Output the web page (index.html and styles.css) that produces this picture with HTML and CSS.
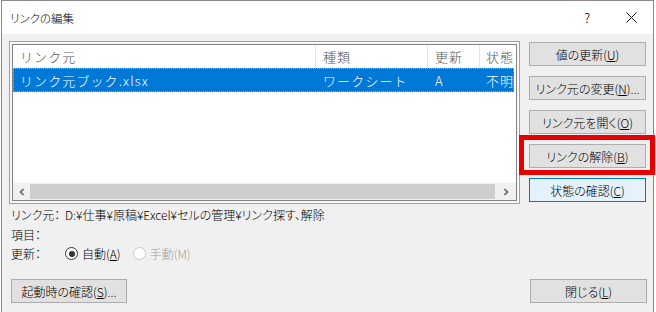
FILE: index.html
```html
<!DOCTYPE html>
<html lang="ja">
<head>
<meta charset="utf-8">
<title>リンクの編集</title>
<link rel="stylesheet" href="styles.css">
</head>
<body>
<div class="window">
  <div class="titlebar">
    <span class="title">リンクの編集</span>
    <span class="help">?</span>
    <span class="close"><svg width="11" height="11" viewBox="0 0 11 11"><path d="M0.5 0.5 L10.5 10.5 M10.5 0.5 L0.5 10.5" stroke="#111" stroke-width="1" fill="none"/></svg></span>
  </div>
  <div class="body">
    <div class="top">
      <div class="listbox">
        <div class="lv">
          <div class="lv-head">
            <div class="c c1">リンク元</div>
            <div class="c c2">種類</div>
            <div class="c c3">更新</div>
            <div class="c c4">状態</div>
          </div>
          <div class="lv-row sel">
            <div class="c c1">リンク元ブック.xlsx</div>
            <div class="c c2">ワークシート</div>
            <div class="c c3">A</div>
            <div class="c c4">不明</div>
          </div>
          <div class="lv-empty"></div>
          <div class="hscroll">
            <span class="arr"><svg width="8" height="8" viewBox="0 0 8 8"><path d="M5.5 1 L2.5 4 L5.5 7" stroke="#606060" stroke-width="1.6" fill="none"/></svg></span>
            <div class="track"></div>
            <span class="arr"><svg width="8" height="8" viewBox="0 0 8 8"><path d="M2.5 1 L5.5 4 L2.5 7" stroke="#606060" stroke-width="1.6" fill="none"/></svg></span>
          </div>
        </div>
      </div>
      <div class="btncol">
        <button class="btn">値の更新(<u>U</u>)</button>
        <button class="btn">リンク元の変更(<u>N</u>)...</button>
        <button class="btn">リンク元を開く(<u>O</u>)</button>
        <div class="hl">
          <button class="btn">リンクの解除(<u>B</u>)</button>
          <div class="redbox"></div>
        </div>
        <button class="btn focus">状態の確認(<u>C</u>)</button>
      </div>
    </div>
    <div class="info">
      <div class="irow"><span class="lbl">リンク元：</span><span class="val">D:¥仕事¥原稿¥Excel¥セルの管理¥リンク探す、解除</span></div>
      <div class="irow"><span class="lbl">項目：</span><span class="val"></span></div>
      <div class="irow"><span class="lbl">更新：</span>
        <span class="radios">
          <span class="radio on"><span class="dot"></span>自動(<u>A</u>)</span>
          <span class="radio off"><span class="dot"></span>手動(M)</span>
        </span>
      </div>
    </div>
    <div class="bottom">
      <button class="btn wide">起動時の確認(<u>S</u>)...</button>
      <button class="btn">閉じる(<u>L</u>)</button>
    </div>
  </div>
</div>
</body>
</html>
```

FILE: styles.css
```css
* { box-sizing: border-box; }
html, body { margin: 0; padding: 0; background: #ffffff; }
body {
  font-family: "Noto Sans CJK JP", "Noto Sans", sans-serif;
  font-feature-settings: "palt";
  font-size: 12px;
  font-weight: 300;
  color: #000;
}
.window {
  margin-left: 1px;
  width: 653px;
  height: 312px;
  border: 1px solid #8a8a8a;
  border-bottom: none;
  background: #f0f0f0;
  display: flex;
  flex-direction: column;
}
.titlebar {
  height: 33px;
  background: #ffffff;
  display: flex;
  align-items: center;
  padding-left: 8px;
  flex: none;
}
.title { font-size: 11.5px; color: #000; }
.help { margin-left: auto; font-size: 13px; margin-right: 36px; font-feature-settings: normal; }
.close { width: 11px; height: 11px; margin-right: 16px; display: flex; }
.body {
  flex: 1;
  display: flex;
  flex-direction: column;
  padding: 7px 6px 9px 7px;
}
.top { display: flex; gap: 9px; align-items: flex-start; }
.listbox {
  width: 511px;
  height: 163px;
  border: 1px solid #a0a0a0;
  padding: 2px;
  background: #f7f7f7;
}
.lv {
  height: 100%;
  border: 1px solid #828282;
  background: #fff;
  display: flex;
  flex-direction: column;
  overflow: hidden;
  font-feature-settings: normal;
  font-size: 13px;
  letter-spacing: 1.1px;
}
.lv-head, .lv-row { display: flex; flex: none; white-space: nowrap; }
.lv-head { height: 23px; color: #555; align-items: center; }
.lv-row { height: 24px; align-items: center; margin-right: 2px; }
.lv-row.sel { background: #0078d7; color: #fff; outline: 1px dotted #7fb4e6; outline-offset: -1px; }
.c { padding-left: 7px; overflow: hidden; height: 100%; display: flex; align-items: center; }
.c1 { width: 303px; }
.c2 { width: 112px; }
.c3 { width: 52px; }
.c4 { flex: 1; padding-left: 6px; }
.lv-head .c { border-right: 1px solid #e5e5e5; }
.lv-head .c4 { border-right: none; }
.lv-empty { flex: 1; }
.hscroll { height: 17px; display: flex; flex: none; background: #f0f0f0; }
.arr { width: 17px; display: flex; align-items: center; justify-content: center; flex: none; }
.arr:last-child { width: 21px; }
.track { flex: 1; background: #cdcdcd; margin: 1px 0; }
.btncol { width: 117px; display: flex; flex-direction: column; gap: 10px; margin-top: 1px; }
.btn {
  height: 24px;
  width: 117px;
  border: 1px solid #adadad;
  background: #e1e1e1;
  font-family: inherit;
  font-size: 12px;
  font-weight: 300;
  font-feature-settings: "palt";
  color: #000;
  padding: 0;
  display: flex;
  align-items: center;
  justify-content: center;
}
.btn.focus { background: #e5f1fb; border-color: #0078d7; }
.btn.wide { width: 116px; }
.hl { position: relative; }
.redbox {
  position: absolute;
  left: -10px;
  right: -9px;
  top: -9px;
  bottom: -7px;
  border: 5px solid #e60000;
  pointer-events: none;
}
.info { padding-top: 1px; padding-left: 2px; }
.irow { height: 19.5px; display: flex; align-items: center; }
.lbl { width: 54px; flex: none; }
.radios { display: flex; align-items: center; }
.radio { display: flex; align-items: center; margin-right: 12px; }
.radio .dot {
  width: 13px; height: 13px; border-radius: 50%;
  border: 1px solid #333; background: #fff; margin-right: 4px; position: relative;
}
.radio.on .dot::after {
  content: ""; position: absolute; left: 2.5px; top: 2.5px; width: 6px; height: 6px; border-radius: 50%; background: #333;
}
.radio.off { color: #a0a0a0; }
.radio.off .dot { border-color: #c8c8c8; }
.bottom { margin-top: auto; display: flex; justify-content: space-between; padding-left: 2px; }
```
